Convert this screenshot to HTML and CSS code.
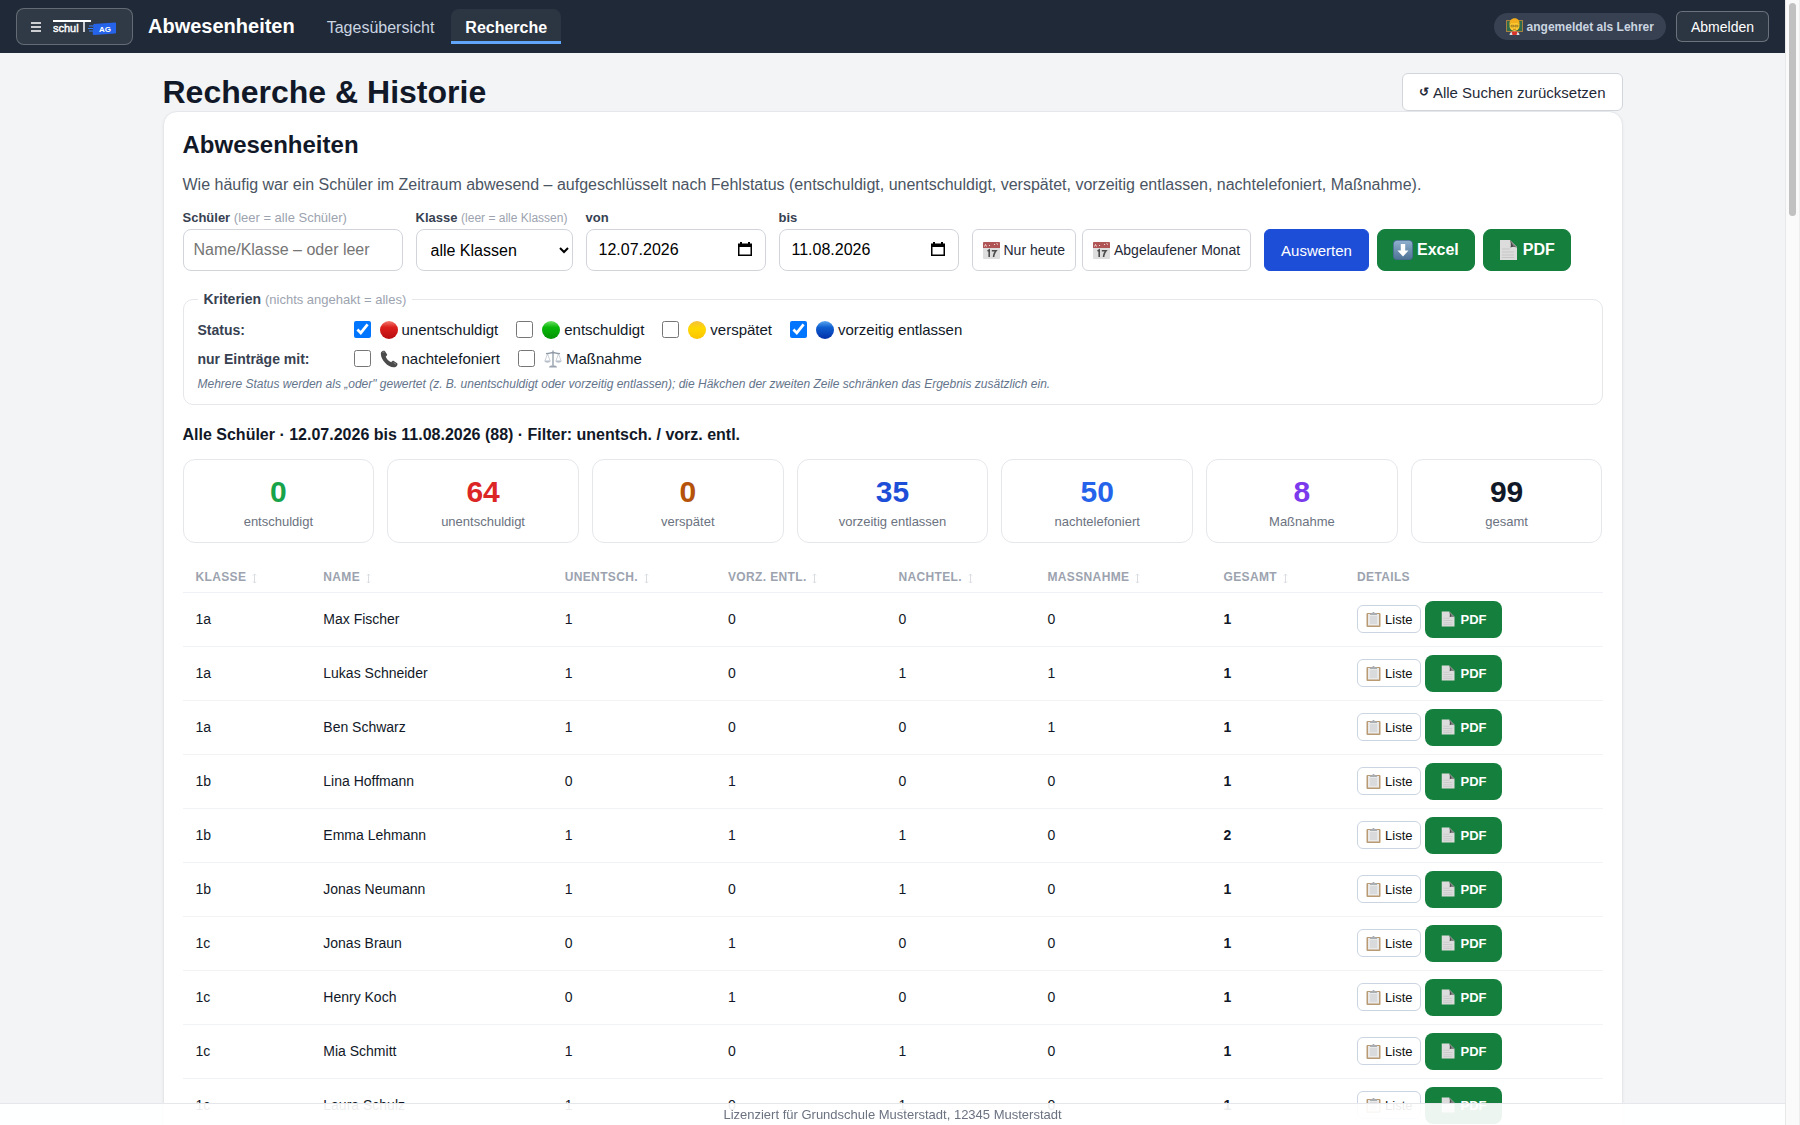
FILE: index.html
```html
<!DOCTYPE html>
<html lang="de">

<head>
    <meta charset="UTF-8">
    <meta name="viewport" content="width=device-width, initial-scale=1.0">
    <title>Recherche – Abwesenheiten</title>
    <link rel="stylesheet" href="styles.css">
</head>

<body>

<!-- Icons -->
<svg class="symbols" width="0" height="0" aria-hidden="true">
    <defs>
        <linearGradient id="g-red" x1="0" y1="0" x2="0" y2="1"><stop offset="0" stop-color="#f47a70"/><stop offset=".35" stop-color="#dc1f1c"/><stop offset="1" stop-color="#b80d10"/></linearGradient>
        <linearGradient id="g-green" x1="0" y1="0" x2="0" y2="1"><stop offset="0" stop-color="#6fe066"/><stop offset=".35" stop-color="#08b808"/><stop offset="1" stop-color="#049204"/></linearGradient>
        <linearGradient id="g-yellow" x1="0" y1="0" x2="0" y2="1"><stop offset="0" stop-color="#f5c040"/><stop offset=".4" stop-color="#ffd800"/><stop offset="1" stop-color="#fbc400"/></linearGradient>
        <linearGradient id="g-blue" x1="0" y1="0" x2="0" y2="1"><stop offset="0" stop-color="#5aa8f0"/><stop offset=".35" stop-color="#0f5fd0"/><stop offset="1" stop-color="#0330a8"/></linearGradient>
        <linearGradient id="g-steel" x1="0" y1="0" x2="0" y2="1"><stop offset="0" stop-color="#8fb0cd"/><stop offset="1" stop-color="#4f7396"/></linearGradient>
    </defs>
    <symbol id="i-page" viewBox="0 0 20 20">
        <path d="M1 0h10l7 7v13H1z" fill="#dcdcdc"/>
        <path d="M3 9h8M3 12h12M3 15h12M3 17.500h12" stroke="#c6c6c6" stroke-width="1"/>
        <path d="M11 0l7 8c-2-1.500-4-1.500-6.500-.500C12 5 12 3 11 0z" fill="#4a4a4a"/>
        <path d="M11 0l7 7.500-4-2z" fill="#8b8b8b"/>
    </symbol>
    <symbol id="i-down" viewBox="0 0 20 20">
        <rect width="20" height="20" rx="4" fill="#466a8c"/>
        <rect x=".8" y=".8" width="18.400" height="18.400" rx="3.500" fill="url(#g-steel)"/>
        <path d="M7.800 4h4.400v6.500h3.300L10 16.500l-5.500-6h3.300z" fill="#fff"/>
    </symbol>
    <symbol id="i-calendar" viewBox="0 0 17 17">
        <rect width="17" height="17" rx="1" fill="#dedede"/>
        <path d="M0 1a1 1 0 0 1 1-1h15a1 1 0 0 1 1 1v5H0z" fill="#b05555"/>
        <path d="M1.500 4.500l1-2 1 2M6 3.500h1M11 2.500h1M13.500 1.500l1.500 1" stroke="#f1dada" fill="none"/>
        <path d="M4.500 9.200L6.200 8v7M8.800 8.700h4.200c-1.600 1.800-2.300 3.700-2.400 6.300" stroke="#4c4c4c" stroke-width="1.600" fill="none"/>
    </symbol>
    <symbol id="i-clipboard" viewBox="0 0 15 15">
        <rect x=".5" y="1" width="14" height="14" rx="1" fill="#b99a72"/>
        <rect x="2" y="2" width="11" height="11.500" fill="#e9e9ea"/>
        <path d="M4 5h7M4 7h7M4 9h7M4 11h7" stroke="#c9cbce"/>
        <path d="M4 1.200h2L7 0h1l1 1.200h2V3H4z" fill="#a9aeb3"/>
    </symbol>
    <symbol id="i-phone" viewBox="0 0 18 18">
        <path d="M1 2.500C2 .8 4 .2 5 1.200l2 3c.5.900-.600 1.700-1.300 2.300.8 2.600 3 4.800 5.600 5.700.700-.800 1.600-1.700 2.500-1.200l3.400 2.300c.800 1-.200 3-1.700 3.700C9 19-.5 9 1 2.500z" fill="#4b4b4b"/>
        <path d="M2.500 3c.6-1 1.500-1.300 2-1M13.500 12.500l2.500 1.700" stroke="#8c8c8c" fill="none"/>
    </symbol>
    <symbol id="i-scale" viewBox="0 0 18 18">
        <path d="M9 .5v15M2 3.500c2.500.4 4.500-1 7-1s4.500 1.400 7 1" stroke="#8f9aa6" stroke-width="1.300" fill="none"/>
        <path d="M3.500 4L1 10.500M3.500 4L6 10.500M14.500 4L12 10.500M14.500 4l2.500 6.500" stroke="#b4bcc5" stroke-width=".7"/>
        <path d="M.3 10.500h6.400c-.3 3-6.100 3-6.400 0zM11.300 10.500h6.400c-.3 3-6.100 3-6.400 0z" fill="#b7c0ca"/>
        <path d="M5 17.500c0-1.500 2-2.300 4-2.300s4 .8 4 2.300z" fill="#9aa5b1"/>
    </symbol>
    <symbol id="i-teacher" viewBox="0 0 17 17">
        <rect y="2" width="17" height="12" fill="#a9803f"/>
        <rect x="1" y="3" width="15" height="10" fill="#2f6b4c"/>
        <path d="M3.500 17c0-2.500 2-3.500 5-3.500s5 1 5 3.500z" fill="#d9dde2"/>
        <path d="M5.500 13.500h6L10.500 17h-4z" fill="#d8342c"/>
        <circle cx="8.500" cy="8" r="5" fill="#fcc930"/>
        <path d="M3.500 7C3 2.500 5.500.300 8.700.300S14 2.500 13.500 7c-1-.500-1.500-1.500-2-2.500-2 1-4.500 1-6.500.200-.400 1-.800 1.800-1.500 2.300z" fill="#f2ae1c"/>
        <path d="M5 7.300h3v1.500H5zM9 7.300h3v1.500H9z" fill="none" stroke="#7a5a20" stroke-width=".6"/>
        <path d="M7 11c1 .6 2 .6 3 0" stroke="#8b4a10" stroke-width=".6" fill="none"/>
    </symbol>
    <symbol id="i-date" viewBox="0 0 14 16">
        <path d="M2 1h2v1.500h6V1h2v1.500h2V15H0V2.500h2zM1.500 6v7.500h11V6z" fill="#000" fill-rule="evenodd"/>
    </symbol>
    <symbol id="i-sort" viewBox="0 0 5 11">
        <path d="M2.500 1v9M1 2.500L2.500 1 4 2.500M1 8.500L2.500 10 4 8.500" stroke="currentColor" stroke-width=".8" fill="none"/>
    </symbol>
</svg>

<div class="page">

    <header class="topbar">
        <button type="button" class="menu-btn" aria-label="Menü">
            <svg width="10" height="10" viewBox="0 0 10 10"><path d="M0 1h10M0 5h10M0 9h10" stroke="#fff" stroke-width="1.400"/></svg>
            <svg class="logo" width="64" height="18" viewBox="0 0 64 18">
                <path d="M0 3h38" stroke="#fff" stroke-width="1.800"/>
                <path d="M31 3v11" stroke="#fff" stroke-width="1.500"/>
                <text x="0" y="14" class="logo-text">schul</text>
                <path d="M36 8h5M35 10.500h5M36 13h4" stroke="#3b82f6" stroke-width="1"/>
                <path d="M40.500 6L62 4.500q1 0 1 1v9q0 1-1 1L41 17q-1.500 0-1.300-1.300z" fill="#2563eb"/>
                <text x="46" y="14" class="logo-ag">AG</text>
            </svg>
        </button>
        <span class="brand">Abwesenheiten</span>
        <nav class="tabs">
            <a href="#tag">Tagesübersicht</a>
            <a href="#recherche" class="active">Recherche</a>
        </nav>
        <span class="role"><svg width="17" height="17"><use href="#i-teacher"/></svg>angemeldet als Lehrer</span>
        <button type="button" class="logout">Abmelden</button>
    </header>

    <main>
        <div class="head">
            <h1>Recherche &amp; Historie</h1>
            <button type="button" class="btn reset"><span class="arrow">↺</span> Alle Suchen zurücksetzen</button>
        </div>

        <section class="card">
            <h2>Abwesenheiten</h2>
            <p class="intro">Wie häufig war ein Schüler im Zeitraum abwesend – aufgeschlüsselt nach Fehlstatus (entschuldigt, unentschuldigt, verspätet, vorzeitig entlassen, nachtelefoniert, Maßnahme).</p>

            <form class="filter">
                <div class="field field-name">
                    <label for="schueler">Schüler <span class="hint">(leer = alle Schüler)</span></label>
                    <input type="text" id="schueler" placeholder="Name/Klasse – oder leer">
                </div>
                <div class="field field-class">
                    <label for="klasse">Klasse <span class="hint">(leer = alle Klassen)</span></label>
                    <select id="klasse">
                        <option>alle Klassen</option>
                        <option>1a</option>
                        <option>1b</option>
                        <option>1c</option>
                    </select>
                </div>
                <div class="field field-date">
                    <label for="von">von</label>
                    <div class="date">
                        <input type="text" id="von" value="12.07.2026">
                        <button type="button" aria-label="Kalender öffnen"><svg width="14" height="16"><use href="#i-date"/></svg></button>
                    </div>
                </div>
                <div class="field field-date">
                    <label for="bis">bis</label>
                    <div class="date">
                        <input type="text" id="bis" value="11.08.2026">
                        <button type="button" aria-label="Kalender öffnen"><svg width="14" height="16"><use href="#i-date"/></svg></button>
                    </div>
                </div>
                <div class="quick">
                    <button type="button" class="btn small"><svg width="17" height="17"><use href="#i-calendar"/></svg>Nur heute</button>
                    <button type="button" class="btn small"><svg width="17" height="17"><use href="#i-calendar"/></svg>Abgelaufener Monat</button>
                </div>
                <div class="actions">
                    <button type="button" class="btn primary">Auswerten</button>
                    <button type="button" class="btn green"><svg width="20" height="20"><use href="#i-down"/></svg>Excel</button>
                    <button type="button" class="btn green"><svg width="20" height="20"><use href="#i-page"/></svg>PDF</button>
                </div>
            </form>

            <fieldset class="criteria">
                <legend>Kriterien <span class="hint">(nichts angehakt = alles)</span></legend>
                <div class="crit-row">
                    <span class="crit-label">Status:</span>
                    <label><input type="checkbox" checked><svg width="18" height="18"><circle cx="9" cy="9" r="9" fill="url(#g-red)"/></svg>unentschuldigt</label>
                    <label><input type="checkbox"><svg width="18" height="18"><circle cx="9" cy="9" r="9" fill="url(#g-green)"/></svg>entschuldigt</label>
                    <label><input type="checkbox"><svg width="18" height="18"><circle cx="9" cy="9" r="9" fill="url(#g-yellow)"/></svg>verspätet</label>
                    <label><input type="checkbox" checked><svg width="18" height="18"><circle cx="9" cy="9" r="9" fill="url(#g-blue)"/></svg>vorzeitig entlassen</label>
                </div>
                <div class="crit-row">
                    <span class="crit-label">nur Einträge mit:</span>
                    <label><input type="checkbox"><svg width="18" height="18"><use href="#i-phone"/></svg>nachtelefoniert</label>
                    <label><input type="checkbox"><svg width="18" height="18"><use href="#i-scale"/></svg>Maßnahme</label>
                </div>
                <p class="note">Mehrere Status werden als „oder" gewertet (z. B. unentschuldigt oder vorzeitig entlassen); die Häkchen der zweiten Zeile schränken das Ergebnis zusätzlich ein.</p>
            </fieldset>

            <h3>Alle Schüler · 12.07.2026 bis 11.08.2026 (88) · Filter: unentsch. / vorz. entl.</h3>

            <div class="stats">
                <div class="stat"><b class="c-green">0</b><span>entschuldigt</span></div>
                <div class="stat"><b class="c-red">64</b><span>unentschuldigt</span></div>
                <div class="stat"><b class="c-brown">0</b><span>verspätet</span></div>
                <div class="stat"><b class="c-navy">35</b><span>vorzeitig entlassen</span></div>
                <div class="stat"><b class="c-blue">50</b><span>nachtelefoniert</span></div>
                <div class="stat"><b class="c-violet">8</b><span>Maßnahme</span></div>
                <div class="stat"><b>99</b><span>gesamt</span></div>
            </div>

            <table>
                <colgroup>
                    <col class="w-klasse"><col class="w-name"><col class="w-un"><col class="w-vorz">
                    <col class="w-nach"><col class="w-mass"><col class="w-ges"><col>
                </colgroup>
                <thead>
                    <tr>
                        <th>Klasse <svg width="5" height="11"><use href="#i-sort"/></svg></th>
                        <th>Name <svg width="5" height="11"><use href="#i-sort"/></svg></th>
                        <th>Unentsch. <svg width="5" height="11"><use href="#i-sort"/></svg></th>
                        <th>Vorz. entl. <svg width="5" height="11"><use href="#i-sort"/></svg></th>
                        <th>Nachtel. <svg width="5" height="11"><use href="#i-sort"/></svg></th>
                        <th>Massnahme <svg width="5" height="11"><use href="#i-sort"/></svg></th>
                        <th>Gesamt <svg width="5" height="11"><use href="#i-sort"/></svg></th>
                        <th>Details</th>
                    </tr>
                </thead>
                <tbody>
                    <tr>
                        <td>1a</td><td>Max Fischer</td><td>1</td><td>0</td><td>0</td><td>0</td><td class="sum">1</td>
                        <td><div class="row-btns"><button type="button" class="list-btn"><svg width="15" height="15"><use href="#i-clipboard"/></svg>Liste</button><button type="button" class="pdf-btn"><svg width="15" height="16"><use href="#i-page"/></svg>PDF</button></div></td>
                    </tr>
                    <tr>
                        <td>1a</td><td>Lukas Schneider</td><td>1</td><td>0</td><td>1</td><td>1</td><td class="sum">1</td>
                        <td><div class="row-btns"><button type="button" class="list-btn"><svg width="15" height="15"><use href="#i-clipboard"/></svg>Liste</button><button type="button" class="pdf-btn"><svg width="15" height="16"><use href="#i-page"/></svg>PDF</button></div></td>
                    </tr>
                    <tr>
                        <td>1a</td><td>Ben Schwarz</td><td>1</td><td>0</td><td>0</td><td>1</td><td class="sum">1</td>
                        <td><div class="row-btns"><button type="button" class="list-btn"><svg width="15" height="15"><use href="#i-clipboard"/></svg>Liste</button><button type="button" class="pdf-btn"><svg width="15" height="16"><use href="#i-page"/></svg>PDF</button></div></td>
                    </tr>
                    <tr>
                        <td>1b</td><td>Lina Hoffmann</td><td>0</td><td>1</td><td>0</td><td>0</td><td class="sum">1</td>
                        <td><div class="row-btns"><button type="button" class="list-btn"><svg width="15" height="15"><use href="#i-clipboard"/></svg>Liste</button><button type="button" class="pdf-btn"><svg width="15" height="16"><use href="#i-page"/></svg>PDF</button></div></td>
                    </tr>
                    <tr>
                        <td>1b</td><td>Emma Lehmann</td><td>1</td><td>1</td><td>1</td><td>0</td><td class="sum">2</td>
                        <td><div class="row-btns"><button type="button" class="list-btn"><svg width="15" height="15"><use href="#i-clipboard"/></svg>Liste</button><button type="button" class="pdf-btn"><svg width="15" height="16"><use href="#i-page"/></svg>PDF</button></div></td>
                    </tr>
                    <tr>
                        <td>1b</td><td>Jonas Neumann</td><td>1</td><td>0</td><td>1</td><td>0</td><td class="sum">1</td>
                        <td><div class="row-btns"><button type="button" class="list-btn"><svg width="15" height="15"><use href="#i-clipboard"/></svg>Liste</button><button type="button" class="pdf-btn"><svg width="15" height="16"><use href="#i-page"/></svg>PDF</button></div></td>
                    </tr>
                    <tr>
                        <td>1c</td><td>Jonas Braun</td><td>0</td><td>1</td><td>0</td><td>0</td><td class="sum">1</td>
                        <td><div class="row-btns"><button type="button" class="list-btn"><svg width="15" height="15"><use href="#i-clipboard"/></svg>Liste</button><button type="button" class="pdf-btn"><svg width="15" height="16"><use href="#i-page"/></svg>PDF</button></div></td>
                    </tr>
                    <tr>
                        <td>1c</td><td>Henry Koch</td><td>0</td><td>1</td><td>0</td><td>0</td><td class="sum">1</td>
                        <td><div class="row-btns"><button type="button" class="list-btn"><svg width="15" height="15"><use href="#i-clipboard"/></svg>Liste</button><button type="button" class="pdf-btn"><svg width="15" height="16"><use href="#i-page"/></svg>PDF</button></div></td>
                    </tr>
                    <tr>
                        <td>1c</td><td>Mia Schmitt</td><td>1</td><td>0</td><td>1</td><td>0</td><td class="sum">1</td>
                        <td><div class="row-btns"><button type="button" class="list-btn"><svg width="15" height="15"><use href="#i-clipboard"/></svg>Liste</button><button type="button" class="pdf-btn"><svg width="15" height="16"><use href="#i-page"/></svg>PDF</button></div></td>
                    </tr>
                    <tr>
                        <td>1c</td><td>Laura Schulz</td><td>1</td><td>0</td><td>1</td><td>0</td><td class="sum">1</td>
                        <td><div class="row-btns"><button type="button" class="list-btn"><svg width="15" height="15"><use href="#i-clipboard"/></svg>Liste</button><button type="button" class="pdf-btn"><svg width="15" height="16"><use href="#i-page"/></svg>PDF</button></div></td>
                    </tr>
                </tbody>
            </table>
        </section>
    </main>

    <footer class="license">Lizenziert für Grundschule Musterstadt, 12345 Musterstadt</footer>
</div>

<div class="scrollbar" aria-hidden="true"><div class="thumb"></div></div>

</body>

</html>
```

FILE: styles.css
```css
* {
    box-sizing: border-box;
}

body {
    display: flex;
    height: 100vh;
    margin: 0;
    font-family: "Liberation Sans", Arial, Helvetica, sans-serif;
    font-size: 16px;
    color: #111827;
    background: #f3f4f6;
}

button,
input,
select {
    font-family: inherit;
}

h1, h2, h3, p {
    margin: 0;
}

.symbols {
    position: absolute;
}

/* scroll area */
.page {
    flex: 1;
    min-width: 0;
    overflow-y: auto;
    scrollbar-width: none;
    display: flex;
    flex-direction: column;
}

.scrollbar {
    flex: none;
    width: 15px;
    padding: 3px;
    background: #fafafa;
    border-left: 1px solid #e8e8e8;
    border-right: 1px solid #ededed;
}

.thumb {
    height: 19%;
    background: #c1c1c1;
    border-radius: 4px;
}

/* top bar */
.topbar {
    position: sticky;
    top: 0;
    z-index: 5;
    flex: none;
    display: flex;
    align-items: center;
    height: 53px;
    padding: 0 16px;
    background: #1f2937;
    color: #fff;
}

.menu-btn {
    display: flex;
    align-items: center;
    gap: 12px;
    height: 37px;
    padding: 0 15px 0 14px;
    color: #fff;
    background: rgba(255, 255, 255, .08);
    border: 1px solid rgba(255, 255, 255, .25);
    border-radius: 8px;
}

.logo-text {
    font-size: 11px;
    fill: #fff;
    stroke: #fff;
    stroke-width: .4px;
}

.logo-ag {
    font-size: 8px;
    font-weight: bold;
    fill: #fff;
}

.brand {
    margin-left: 15px;
    font-size: 20px;
    font-weight: bold;
}

.tabs {
    display: flex;
    gap: 3px;
    height: 35px;
    margin-left: 18px;
    margin-right: auto;
}

.tabs a {
    padding: 9px 14px 4px;
    font-size: 16px;
    line-height: 19px;
    color: #cbd5e1;
    text-decoration: none;
    border-bottom: 3px solid transparent;
}

.tabs .active {
    color: #fff;
    font-weight: bold;
    background: rgba(255, 255, 255, .06);
    border-color: #60a5fa;
    border-radius: 8px 8px 0 0;
}

.role {
    display: flex;
    align-items: center;
    gap: 4px;
    height: 27px;
    padding: 0 12px;
    font-size: 12px;
    font-weight: bold;
    color: #cbd5e1;
    background: #374151;
    border-radius: 14px;
}

.logout {
    height: 31px;
    margin-left: 10px;
    padding: 0 14px;
    font-size: 14px;
    color: #fff;
    background: rgba(255, 255, 255, .06);
    border: 1px solid rgba(255, 255, 255, .3);
    border-radius: 6px;
}

/* content */
main {
    flex: none;
    width: 100%;
    max-width: 1500px;
    margin: 0 auto;
    padding: 20px;
}

.head {
    display: flex;
    justify-content: space-between;
    align-items: center;
}

h1 {
    font-size: 32px;
    line-height: 38px;
}

h2 {
    font-size: 24px;
    line-height: 28px;
}

h3 {
    margin-top: 20px;
    font-size: 16px;
    line-height: 20px;
}

.card {
    padding: 19px;
    background: #fff;
    border: 1px solid #e5e7eb;
    border-radius: 14px;
    box-shadow: 0 1px 3px rgba(0, 0, 0, .06);
}

.intro {
    margin-top: 14px;
    line-height: 24px;
    color: #4b5563;
}

.btn {
    display: flex;
    align-items: center;
    justify-content: center;
    gap: 4px;
    height: 42px;
    padding: 0 16px;
    font-size: 15px;
    color: #1f2937;
    background: #fff;
    border: 1px solid #d1d5db;
    border-radius: 6px;
    white-space: nowrap;
}

.reset {
    height: 38px;
}

.reset .arrow {
    font-size: 12px;
    font-weight: bold;
}

.small {
    padding: 0 10px;
    font-size: 14px;
}

.primary {
    color: #fff;
    background: #1d4ed8;
    border-color: #1d4ed8;
}

.green {
    padding: 0 15px;
    font-size: 16px;
    font-weight: bold;
    color: #fff;
    background: #15803d;
    border-color: #15803d;
    border-radius: 8px;
}

/* filter form */
.filter {
    display: flex;
    align-items: flex-end;
    gap: 13px;
    margin-top: 13px;
}

.field label {
    display: block;
    margin-bottom: 3px;
    font-size: 13px;
    line-height: 16px;
    font-weight: bold;
    color: #374151;
    white-space: nowrap;
}

.hint {
    font-size: 13px;
    font-weight: normal;
    color: #9ca3af;
}

.field input,
.field select {
    width: 100%;
    height: 42px;
    padding: 0 10px;
    font-size: 16px;
    color: #000;
    background: #fff;
    border: 1px solid #d1d5db;
    border-radius: 8px;
}

.field input::placeholder {
    color: #757575;
}

.field-name {
    width: 220px;
}

.field-class {
    width: 157px;
}

.field-class .hint {
    font-size: 12px;
}

.field-date {
    width: 180px;
}

.date {
    position: relative;
}

.date input {
    padding-left: 12px;
}

.date button {
    position: absolute;
    top: 12px;
    right: 14px;
    padding: 0;
    line-height: 0;
    background: none;
    border: 0;
}

.quick {
    display: flex;
    gap: 6px;
}

.actions {
    display: flex;
    gap: 8px;
}

/* criteria box */
.criteria {
    margin: 20px 0 0;
    padding: 7px 14px 11px;
    border: 1px solid #e5e7eb;
    border-radius: 10px;
}

.criteria legend {
    padding: 0 6px;
    font-size: 14px;
    line-height: 16px;
    font-weight: bold;
    color: #374151;
}

.crit-row {
    display: flex;
    align-items: center;
    gap: 18px;
    height: 29px;
}

.crit-label {
    width: 138px;
    font-size: 14px;
    font-weight: bold;
    color: #374151;
}

.crit-row label {
    display: flex;
    align-items: center;
    font-size: 15px;
}

.crit-row input {
    width: 17px;
    height: 17px;
    margin: 0 9px 0 0;
}

.crit-row svg {
    margin-right: 4px;
}

.note {
    margin-top: 2px;
    font-size: 12px;
    line-height: 18px;
    font-style: italic;
    color: #64748b;
}

/* key figures */
.stats {
    display: grid;
    grid-template-columns: repeat(7, 1fr);
    gap: 13px;
    margin-top: 14px;
}

.stat {
    display: flex;
    flex-direction: column;
    align-items: center;
    padding: 14px 10px 11px;
    border: 1px solid #e5e7eb;
    border-radius: 12px;
}

.stat b {
    font-size: 30px;
    line-height: 36px;
}

.stat span {
    margin-top: 3px;
    font-size: 13px;
    line-height: 18px;
    color: #6b7280;
}

.c-green { color: #16a34a; }
.c-red { color: #dc2626; }
.c-brown { color: #b45309; }
.c-navy { color: #1d4ed8; }
.c-blue { color: #2563eb; }
.c-violet { color: #7c3aed; }

/* result table */
table {
    width: 100%;
    margin-top: 19px;
    table-layout: fixed;
    border-collapse: collapse;
}

.w-klasse { width: 9%; }
.w-name { width: 17%; }
.w-un { width: 11.5%; }
.w-vorz { width: 12%; }
.w-nach { width: 10.5%; }
.w-mass { width: 12.4%; }
.w-ges { width: 9.4%; }

th {
    height: 30px;
    padding: 0 13px;
    text-align: left;
    font-size: 12px;
    letter-spacing: .03em;
    text-transform: uppercase;
    color: #9ca3af;
    border-bottom: 1px solid #eef2f7;
}

th svg {
    margin-left: 2px;
    vertical-align: -3px;
    color: #d1d5db;
}

td {
    height: 54px;
    padding: 0 13px;
    font-size: 14px;
    border-bottom: 1px solid #f1f3f5;
}

.sum {
    font-weight: bold;
}

.row-btns {
    display: flex;
    align-items: center;
    gap: 4px;
}

.list-btn,
.pdf-btn {
    display: flex;
    align-items: center;
    gap: 4px;
    font-size: 13px;
}

.list-btn {
    height: 28px;
    padding: 0 8px;
    color: #111;
    background: #fff;
    border: 1px solid #cbd5e1;
    border-radius: 6px;
}

.pdf-btn {
    height: 37px;
    padding: 0 16px;
    font-weight: bold;
    color: #fff;
    background: #15803d;
    border: 0;
    border-radius: 8px;
}

/* license line */
.license {
    position: sticky;
    bottom: 0;
    flex: none;
    height: 22px;
    padding-top: 3px;
    text-align: center;
    font-size: 13px;
    line-height: 16px;
    color: #6b7280;
    background: rgba(255, 255, 255, .92);
    border-top: 1px solid #e5e7eb;
}
```
